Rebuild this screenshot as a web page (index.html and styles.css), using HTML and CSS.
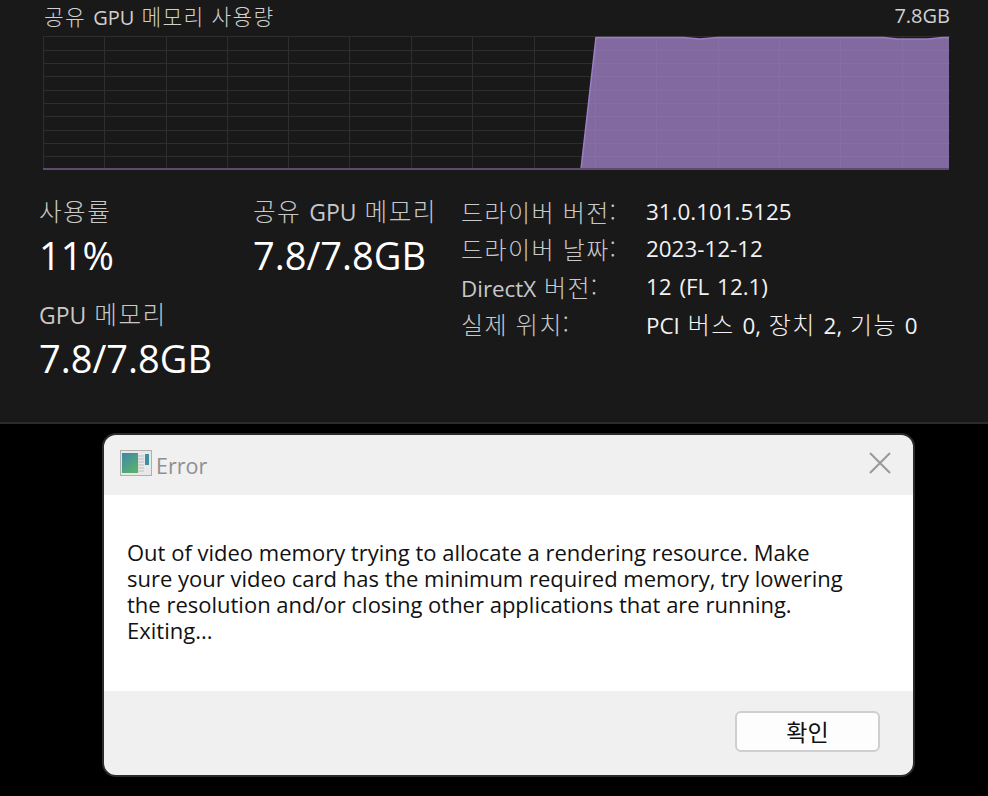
FILE: index.html
```html
<!DOCTYPE html>
<html lang="ko">
<head>
    <meta charset="UTF-8">
    <title>GPU Memory Error</title>
    <link rel="stylesheet" href="styles.css">
</head>
<body>
    <section class="gpu-panel">
        <div class="graph-header">
            <span><span class="ko">공유</span> GPU <span class="ko">메모리</span> <span class="ko">사용량</span></span>
            <span>7.8GB</span>
        </div>
        <svg class="graph" width="907" height="134" viewBox="0 0 907 134">
            <g class="grid">
                <path d="M0 .5H907M0 14.5H907M0 27.5H907M0 40.5H907M0 54.5H907M0 67.5H907M0 80.5H907M0 94.5H907M0 107.5H907M0 120.5H907"/>
                <path d="M.5 0V134M61.5 0V134M123.5 0V134M184.5 0V134M245.5 0V134M306.5 0V134M368.5 0V134M429.5 0V134M491.5 0V134M552.5 0V134M613.5 0V134M675.5 0V134M736.5 0V134M797.5 0V134M859.5 0V134"/>
            </g>
            <polygon class="graph-fill" points="538,133 553,1.5 640,1.5 657,3 675,1.5 840,1.5 855,3 885,3 900,1.5 906,1.5 906,133"/>
            <polyline class="graph-line" points="538,133 553,1.5 640,1.5 657,3 675,1.5 840,1.5 855,3 885,3 900,1.5 906,1.5"/>
            <path class="graph-base" d="M0 133H906"/>
        </svg>

        <div class="stats">
            <div class="stat-col stat-col-first">
                <div class="stat">
                    <div class="stat-label"><span class="ko">사용률</span></div>
                    <div class="stat-value">11%</div>
                </div>
                <div class="stat">
                    <div class="stat-label">GPU <span class="ko">메모리</span></div>
                    <div class="stat-value">7.8/7.8GB</div>
                </div>
            </div>
            <div class="stat-col stat-col-second">
                <div class="stat">
                    <div class="stat-label"><span class="ko">공유</span> GPU <span class="ko">메모리</span></div>
                    <div class="stat-value">7.8/7.8GB</div>
                </div>
            </div>
            <dl class="details">
                <dt><span class="ko">드라이버</span> <span class="ko">버전:</span></dt><dd>31.0.101.5125</dd>
                <dt><span class="ko">드라이버</span> <span class="ko">날짜:</span></dt><dd>2023-12-12</dd>
                <dt>DirectX <span class="ko">버전:</span></dt><dd>12 (FL 12.1)</dd>
                <dt><span class="ko">실제</span> <span class="ko">위치:</span></dt><dd>PCI <span class="ko">버스</span> 0, <span class="ko">장치</span> 2, <span class="ko">기능</span> 0</dd>
            </dl>
        </div>
    </section>

    <div class="dialog">
        <div class="dialog-title">
            <svg class="app-icon" width="32" height="26" viewBox="0 0 32 26">
                <defs>
                    <linearGradient id="pane" x1="0" y1="0" x2="0.6" y2="1">
                        <stop offset="0" stop-color="#3f86a8"/>
                        <stop offset="1" stop-color="#58b070"/>
                    </linearGradient>
                </defs>
                <rect x="0.5" y="0.5" width="31" height="25" fill="#e8e8e8" stroke="#b0b0b0"/>
                <rect x="2" y="3" width="16" height="20" fill="url(#pane)"/>
                <rect x="25" y="4" width="4" height="11" fill="#3f8fa0"/>
                <path d="M18 6H24M18 9H24M18 12H24M18 15H24M18 18H24M18 21H24" stroke="#bdbdbd"/>
            </svg>
            <span class="dialog-name">Error</span>
            <svg class="close-icon" width="22" height="22" viewBox="0 0 22 22">
                <path d="M1 1L21 21M21 1L1 21" stroke="#999" stroke-width="2" fill="none"/>
            </svg>
        </div>
        <div class="dialog-body">
            <p>Out of video memory trying to allocate a rendering resource. Make<br>
            sure your video card has the minimum required memory, try lowering<br>
            the resolution and/or closing other applications that are running.<br>
            Exiting...</p>
        </div>
        <div class="dialog-footer">
            <button class="ok-btn">확인</button>
        </div>
    </div>
</body>
</html>
```

FILE: styles.css
```css
html, body {
    margin: 0;
    height: 796px;
    overflow: hidden;
    background-color: #000;
}

body {
    font-family: 'Open Sans', 'Noto Sans CJK KR', sans-serif;
}

/* hangul runs sit wider than the latin next to them */
.ko {
    font-family: 'Noto Sans CJK KR', sans-serif;
    font-size: 1.07em;
    font-weight: 300;
    letter-spacing: 0.06em;
}

.gpu-panel {
    box-sizing: border-box;
    height: 424px;
    background-color: #191919;
    border-bottom: 2px solid #2b2b2b;
    color: #f2f2f2;
}

.graph-header {
    display: flex;
    justify-content: space-between;
    height: 36px;
    padding: 2px 38px 0 44px;
    box-sizing: border-box;
    font-size: 20px;
    line-height: 28px;
    word-spacing: 2px;
    color: #d0d0d0;
}

.graph {
    display: block;
    margin-left: 43px;
}

.grid path {
    stroke: #2e2e2e;
    fill: none;
}

.graph-fill {
    fill: rgba(166, 133, 206, 0.75);
}

.graph-line {
    stroke: #9a7fc4;
    stroke-width: 1.5;
    fill: none;
}

.graph-base {
    stroke: #5b4d6e;
    stroke-width: 2;
}

.stats {
    display: flex;
    padding: 24px 0 0 39px;
}

.stat-col-first {
    width: 214px;
}

.stat-col-second {
    width: 208px;
}

.stat {
    margin-bottom: 15px;
}

.stat-label {
    font-size: 23px;
    line-height: 32px;
    word-spacing: 2px;
    color: #c8c8c8;
}

.stat-value {
    font-size: 38px;
    line-height: 54px;
    color: #fff;
}

.details {
    display: grid;
    grid-template-columns: 185px auto;
    grid-auto-rows: 37.4px;
    margin: -1px 0 0;
    font-size: 22.4px;
    line-height: 37px;
    word-spacing: 2px;
}

.details dt {
    color: #c8c8c8;
}

.details dd {
    margin: 0;
    color: #f2f2f2;
}

.dialog {
    box-sizing: border-box;
    width: 813px;
    height: 344px;
    margin: 9px 0 0 102px;
    display: flex;
    flex-direction: column;
    background-color: #f0f0f0;
    border: 2px solid #2b2b2b;
    border-radius: 14px;
    overflow: hidden;
}

.dialog-title {
    display: flex;
    align-items: center;
    height: 60px;
    padding: 0 22px 4px 16px;
    box-sizing: border-box;
}

.app-icon {
    margin-right: 4px;
}

.dialog-name {
    flex: 1;
    font-size: 21.5px;
    line-height: 30px;
    margin-top: 6px;
    color: #8f8f8f;
}

.dialog-body {
    height: 196px;
    box-sizing: border-box;
    padding: 44px 0 0 23px;
    background-color: #fff;
    color: #111;
}

.dialog-body p {
    margin: 0;
    font-size: 22px;
    line-height: 26px;
    white-space: nowrap;
}

.dialog-footer {
    flex: 1;
    display: flex;
    justify-content: flex-end;
    align-items: flex-start;
    padding: 20px 33px 0 0;
}

.ok-btn {
    width: 145px;
    height: 41px;
    background-color: #fdfdfd;
    border: 2px solid #cfcfcf;
    border-radius: 6px;
    font-family: 'Noto Sans CJK KR', sans-serif;
    font-size: 23px;
    line-height: 1;
    color: #111;
}
```
